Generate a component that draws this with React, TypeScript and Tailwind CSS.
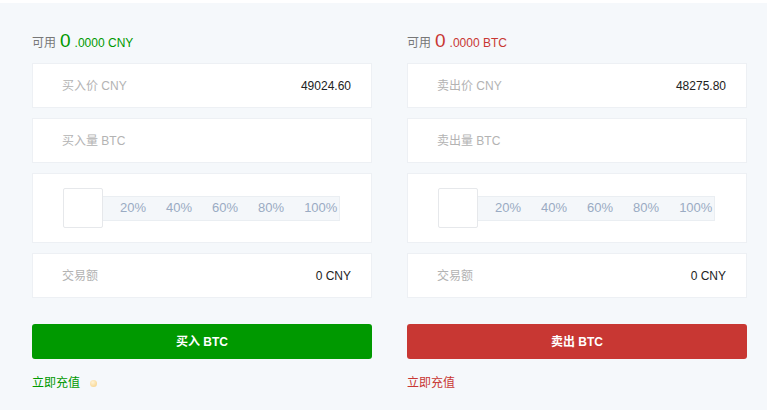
import React from "react";

const font = { fontFamily: '"Liberation Sans", "Noto Sans CJK SC", sans-serif' };

function Row({ label, value }: { label: string; value?: string }) {
  return (
    <div className="h-[45px] bg-white border border-[#edf0f4] flex items-center justify-between pl-[29px] pr-[20px] text-[12px]">
      <span className="text-[#b3b3b3]">{label}</span>
      {value !== undefined && <span className="text-[#222]">{value}</span>}
    </div>
  );
}

function Slider() {
  return (
    <div className="h-[70px] bg-white border border-[#edf0f4] flex items-center pl-[30px]">
      <div className="relative flex items-center">
        <div className="w-[40px] h-[40px] bg-white border border-[#e6e8eb] rounded-[2px] z-10" />
        <div className="h-[25px] w-[238px] -ml-[1px] bg-[#f4f7fa] border border-[#eaeef2] flex items-center pl-[17px] gap-[20px] text-[13px] leading-[20px] text-[#9aabc3]">
          <span>20%</span>
          <span>40%</span>
          <span>60%</span>
          <span>80%</span>
          <span>100%</span>
        </div>
      </div>
    </div>
  );
}

function Column({ side }: { side: "buy" | "sell" }) {
  const buy = side === "buy";
  const color = buy ? "text-[#009900]" : "text-[#c83733]";
  return (
    <div className="w-[340px] flex flex-col">
      <div className="h-[22px] flex items-end text-[12px] mb-[11px]">
        <span className="text-[#777]">可用</span>
        <span className={`${color} text-[19px] leading-[22px] ml-[4px] mr-[4px]`}>0</span>
        <span className={color}>.0000 {buy ? "CNY" : "BTC"}</span>
      </div>
      <div className="flex flex-col gap-[10px]">
        <Row label={buy ? "买入价 CNY" : "卖出价 CNY"} value={buy ? "49024.60" : "48275.80"} />
        <Row label={buy ? "买入量 BTC" : "卖出量 BTC"} />
        <Slider />
        <Row label="交易额" value="0 CNY" />
      </div>
      <button
        className={`mt-[26px] h-[35px] rounded-[3px] text-white text-[12px] font-bold ${buy ? "bg-[#009900]" : "bg-[#c83733]"}`}
      >
        {buy ? "买入 BTC" : "卖出 BTC"}
      </button>
      <div className="mt-[15px] flex items-center text-[12px]">
        <span className={color}>立即充值</span>
        {buy && (
          <span className="ml-[10px] w-[7px] h-[7px] rounded-full bg-[radial-gradient(circle_at_40%_35%,#fff3d6,#f6cf80)]" />
        )}
      </div>
    </div>
  );
}

export default function App() {
  return (
    <div className="w-[772px] h-[418px] bg-white" style={font}>
      <div className="w-[767px] h-[407px] mt-[3px] bg-[#f5f8fb] flex gap-[35px] pl-[32px] pt-[27px]">
        <Column side="buy" />
        <Column side="sell" />
      </div>
    </div>
  );
}
